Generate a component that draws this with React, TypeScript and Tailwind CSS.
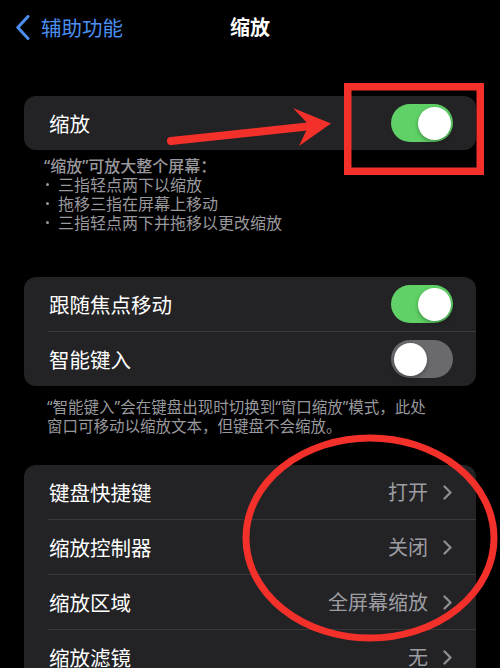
import React from 'react';

const Toggle = ({ on }: { on: boolean }) => (
  <div
    className={`w-[62px] h-[38px] rounded-full p-[2.5px] flex items-center ${
      on ? 'bg-[#5fd166] justify-end' : 'bg-[#69696e] justify-start'
    }`}
  >
    <div className="w-[33px] h-[33px] rounded-full bg-white shadow-[0_2px_4px_rgba(0,0,0,0.3)]" />
  </div>
);

const Chevron = () => (
  <svg width="9" height="15" viewBox="0 0 9 15" className="ml-[15px]">
    <polyline points="1.5,1.5 7.5,7.5 1.5,13.5" fill="none" stroke="#8d8d92" strokeWidth="2.3" strokeLinecap="round" strokeLinejoin="round" />
  </svg>
);

const Divider = () => <div className="ml-[24px] h-px bg-[#38383b]" />;

// narrow latin quotes like iOS renders them
const Q = ({ children }: { children: string }) => (
  <span className="font-['Noto_Sans',sans-serif]">{children}</span>
);

const ToggleRow = ({ label, on }: { label: string; on: boolean }) => (
  <div className="h-[54px] flex items-center justify-between pl-[25px] pr-[23px]">
    <span className="text-[20.5px] text-white">{label}</span>
    <Toggle on={on} />
  </div>
);

const LinkRow = ({ label, value }: { label: string; value: string }) => (
  <div className="h-[54px] flex items-center justify-between pl-[25px] pr-[24px]">
    <span className="text-[20.5px] text-white">{label}</span>
    <div className="flex items-center">
      <span className="text-[20px] text-[#9d9da2]">{value}</span>
      <Chevron />
    </div>
  </div>
);

const App = () => {
  const bullets = ['三指轻点两下以缩放', '拖移三指在屏幕上移动', '三指轻点两下并拖移以更改缩放'];
  const links = [
    { label: '键盘快捷键', value: '打开' },
    { label: '缩放控制器', value: '关闭' },
    { label: '缩放区域', value: '全屏幕缩放' },
    { label: '缩放滤镜', value: '无' },
  ];

  return (
    <div
      lang="zh-CN"
      className="relative w-[500px] h-[668px] overflow-hidden bg-black font-['Noto_Sans_CJK_SC','Noto_Sans',sans-serif]"
    >
      {/* nav bar */}
      <div className="h-[54px] grid grid-cols-[1fr_auto_1fr] items-center">
        <div className="flex items-center pl-[16px] text-[#4b8ff0]">
          <svg width="14" height="25" viewBox="0 0 14 25">
            <polyline points="12,1.5 1.8,12.5 12,23.5" fill="none" stroke="#4b8ff0" strokeWidth="3" strokeLinecap="round" strokeLinejoin="round" />
          </svg>
          <span className="ml-[11px] text-[20.5px]">辅助功能</span>
        </div>
        <div className="text-[20px] font-bold text-white">缩放</div>
        <div />
      </div>

      {/* zoom toggle */}
      <div className="mt-[42px] mx-[24px] rounded-[12px] bg-[#232325]">
        <ToggleRow label="缩放" on />
      </div>
      <div className="pt-[6px] pl-[44px] pr-[30px] text-[16px] leading-[19px] text-[#98989d]">
        <div className="h-[19px] font-medium whitespace-nowrap">
          <Q>“</Q>缩放<Q>”</Q>可放大整个屏幕：
        </div>
        {bullets.map((b) => (
          <div key={b} className="h-[19px] flex items-center">
            <div className="w-[14px] shrink-0 pl-[2px]">
              <div className="w-[3px] h-[3px] rounded-full bg-[#98989d]" />
            </div>
            <span>{b}</span>
          </div>
        ))}
      </div>

      {/* focus / smart typing */}
      <div className="mt-[45px] mx-[24px] rounded-[12px] bg-[#232325] overflow-hidden">
        <ToggleRow label="跟随焦点移动" on />
        <Divider />
        <ToggleRow label="智能键入" on={false} />
      </div>
      <div className="pt-[11px] pl-[47px] pr-[30px] text-[15.5px] leading-[18.5px] text-[#98989d]">
        <div className="h-[18.5px] whitespace-nowrap">
          <Q>“</Q>智能键入<Q>”</Q>会在键盘出现时切换到<Q>“</Q>窗口缩放<Q>”</Q>模式，此处
        </div>
        <div className="h-[18.5px] whitespace-nowrap">窗口可移动以缩放文本，但键盘不会缩放。</div>
      </div>

      {/* links */}
      <div className="mt-[31px] mx-[24px] rounded-t-[12px] bg-[#232325]">
        {links.map((l, i) => (
          <React.Fragment key={l.label}>
            {i > 0 && <Divider />}
            <LinkRow label={l.label} value={l.value} />
          </React.Fragment>
        ))}
      </div>

      {/* red annotations */}
      <svg className="absolute inset-0 pointer-events-none" width="500" height="668" viewBox="0 0 500 668">
        <rect x="347.75" y="86.75" width="132.5" height="84.5" fill="none" stroke="#f4302b" strokeWidth="7.5" />
        <line x1="171" y1="141" x2="312" y2="126" stroke="#f4302b" strokeWidth="8" strokeLinecap="round" />
        <polygon points="331,123.5 293,108 309,125 299,146" fill="#f4302b" />
        <ellipse cx="370" cy="538" rx="124" ry="100" fill="none" stroke="#f4302b" strokeWidth="7" />
      </svg>
    </div>
  );
};

export default App;
